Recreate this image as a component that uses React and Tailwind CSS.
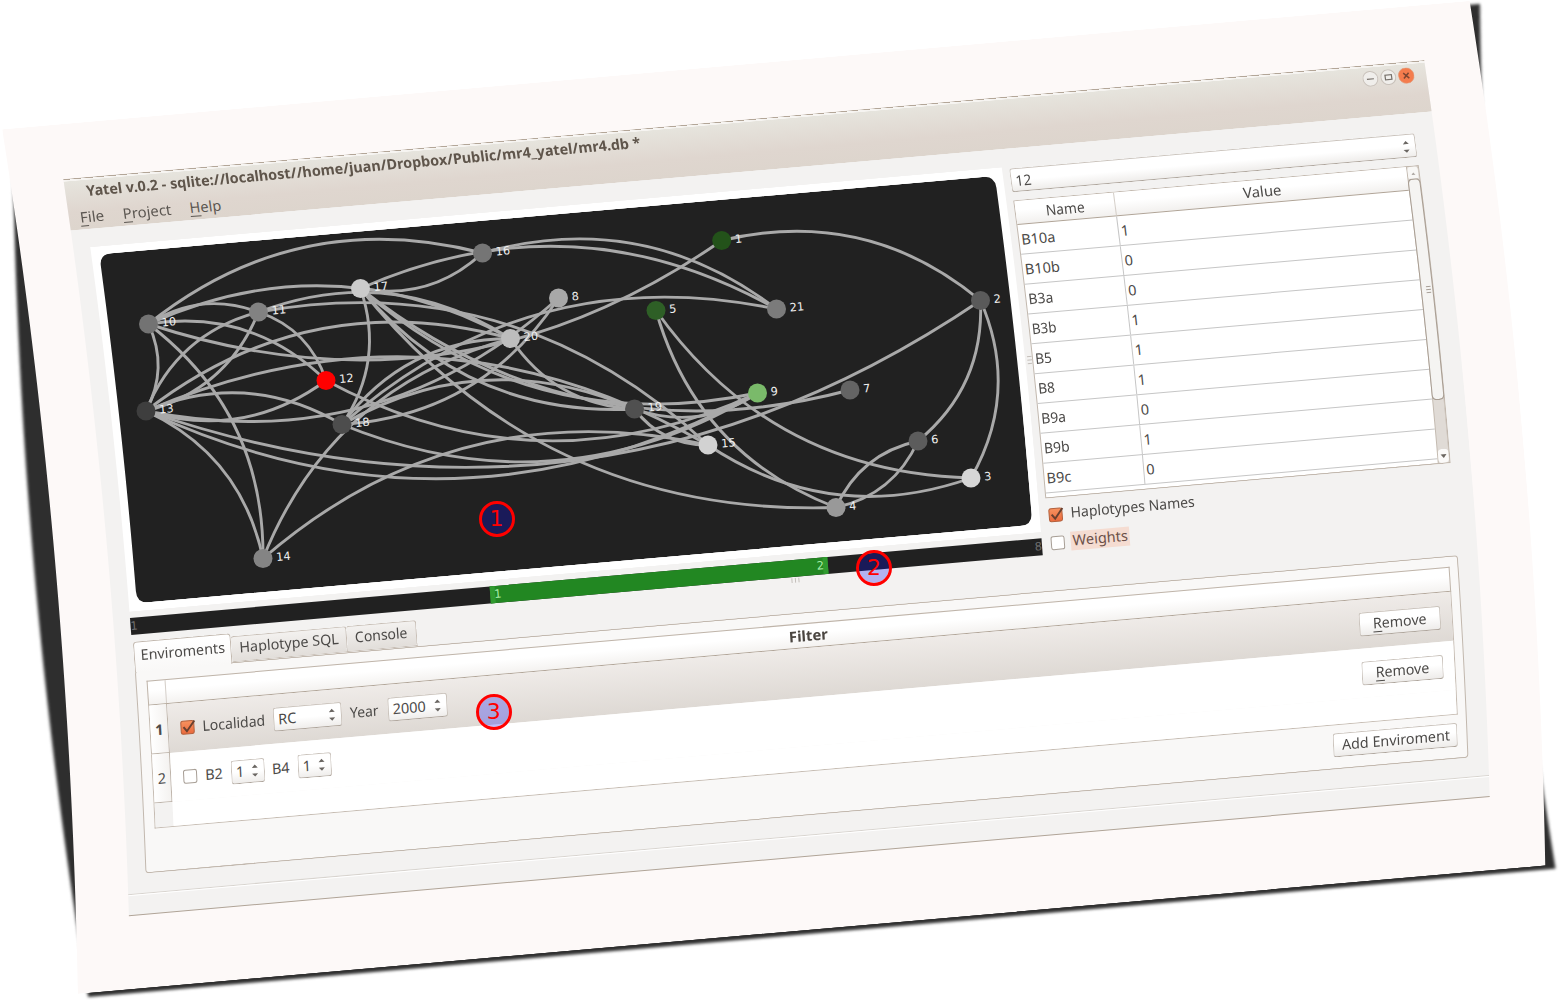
import { useLayoutEffect, useRef, useState } from "react";

const SHEET_H = 868;
const WINDOW_TOP = 55;

// The sheet bows sideways along a parabola, widest at half its height.
const bow = (q) => (60 * q * (SHEET_H - q)) / (SHEET_H * SHEET_H);
const slope = (q) => (60 / SHEET_H) * (1 - (2 * q) / SHEET_H);

function slabPath(w, h, q0, r, factor, pad) {
  const X = (x, y) => (x + pad + factor * bow(q0 + y)).toFixed(2);
  const pts = [];
  const n = Math.max(2, Math.ceil((h - 2 * r) / 20));
  let d = `M${X(r, 0)},0 L${X(w - r, 0)},0 Q${X(w, 0)},0 ${X(w, r)},${r} `;
  for (let i = 1; i <= n; i++) {
    const y = r + ((h - 2 * r) * i) / n;
    pts.push(y);
    d += `L${X(w, y)},${y.toFixed(2)} `;
  }
  d += `Q${X(w, h)},${h} ${X(w - r, h)},${h} L${X(r, h)},${h} Q${X(0, h)},${h} ${X(0, h - r)},${h - r} `;
  for (let i = pts.length - 2; i >= 0; i--) {
    d += `L${X(0, pts[i])},${pts[i].toFixed(2)} `;
  }
  d += `L${X(0, r)},${r} Q${X(0, 0)},0 ${X(r, 0)},0 Z`;
  return `path("${d}")`;
}

// Curved backdrop that fills its relative parent.
function Slab({ w, h, q, r = 0, factor = 1, className }) {
  return (
    <div
      className={`absolute top-0 -left-10 -right-10 h-full ${className}`}
      style={{ clipPath: slabPath(w, h, q, r, factor, 40) }}
    />
  );
}

// Content row that follows the sheet's curve at height v of the window.
function Bent({ v, className = "", children }) {
  const q = v + WINDOW_TOP;
  return (
    <div
      className={className}
      style={{ transform: `translateX(${bow(q)}px) skewX(${Math.atan(slope(q))}rad)` }}
    >
      {children}
    </div>
  );
}

// Text condensed or stretched to a set width.
function Fit({ w, className = "", children }) {
  const ref = useRef(null);
  const [s, setS] = useState(1);
  useLayoutEffect(() => {
    setS(w / ref.current.offsetWidth);
  }, [w]);
  return (
    <span className={`inline-block shrink-0 whitespace-nowrap ${className}`} style={{ width: w }}>
      <span ref={ref} className="inline-block origin-left" style={{ transform: `scaleX(${s})` }}>
        {children}
      </span>
    </span>
  );
}

const Key = ({ children }) => (
  <span className="underline decoration-1 underline-offset-[3px]">{children}</span>
);

const Arrows = () => (
  <svg width="8" height="14" viewBox="0 0 8 14" className="mt-[1px] shrink-0">
    <path d="M1 4.2 L4 1 L7 4.2Z M1 9.8 L4 13 L7 9.8Z" fill="#6a6662" />
  </svg>
);

function Field({ children, className = "" }) {
  return (
    <div
      className={`flex h-6 shrink-0 items-center justify-between rounded-[3px] border border-[#cbc4bd] border-b-[#aea59c] bg-gradient-to-b from-white from-50% to-[#efedeb] pr-[5px] pl-[4px] ${className}`}
    >
      {children}
      <Arrows />
    </div>
  );
}

function Button({ children, className = "" }) {
  return (
    <div
      className={`flex h-6 items-center justify-center rounded-[3px] border border-[#cbc4bd] border-b-[#aea59c] bg-gradient-to-b from-white from-40% to-[#eeecea] pb-[1px] ${className}`}
    >
      {children}
    </div>
  );
}

function Check({ on }) {
  return (
    <svg width="16" height="16" viewBox="0 0 16 16" className="shrink-0 overflow-visible">
      <defs>
        <linearGradient id="orange" x1="0" y1="0" x2="0" y2="1">
          <stop offset="0" stopColor="#f7925f" />
          <stop offset="1" stopColor="#ea6a3d" />
        </linearGradient>
      </defs>
      <rect
        x="1.5"
        y="1.5"
        width="13"
        height="13"
        rx="2"
        fill={on ? "url(#orange)" : "#fff"}
        stroke={on ? "#b3603c" : "#a79e95"}
        strokeWidth="1"
      />
      {on && <path d="M4 7.5 L7.2 11.8 L15.2 1.8" fill="none" stroke="#69402f" strokeWidth="2" />}
    </svg>
  );
}

const NODES = {
  1: [721.7, 240.5, "#23521a"],
  2: [980.5, 300.5, "#5a5a5a"],
  3: [971, 478, "#d6d6d6"],
  4: [836, 507.5, "#999999"],
  5: [656, 310.5, "#2e5f26"],
  6: [918, 441, "#5c5c5c"],
  7: [850, 390, "#646464"],
  8: [558.5, 298, "#a8a8a8"],
  9: [757.5, 393, "#7aba6a"],
  10: [148.5, 324, "#737373"],
  11: [258.5, 312, "#828282"],
  12: [326, 380.5, "#ff0000"],
  13: [146, 411, "#3e3e3e"],
  14: [263, 558.5, "#848484"],
  15: [708, 445, "#d2d2d2"],
  16: [482.5, 253, "#757575"],
  17: [360.5, 288.5, "#cbcbcb"],
  18: [342, 424.5, "#4d4d4d"],
  19: [634.5, 409, "#505050"],
  20: [510.5, 338.5, "#bdbdbd"],
  21: [776.5, 309, "#7b7b7b"],
};

// Every link bulges to the left of its own direction.
const LINKS = [
  [1, 2], [1, 10], [2, 6], [2, 3], [2, 13], [9, 13], [3, 5], [4, 5], [3, 15],
  [4, 6], [6, 4], [4, 17], [7, 17], [9, 17], [19, 17], [10, 13], [18, 21], [8, 18],
  [8, 13], [12, 13], [13, 18], [11, 13], [13, 11], [13, 20], [13, 15], [11, 15],
  [19, 20], [10, 20], [10, 16], [10, 11], [10, 12], [10, 14], [11, 20], [16, 21],
  [17, 21], [16, 17], [17, 18], [11, 12], [9, 12], [9, 18], [13, 14], [14, 20],
  [14, 15], [18, 20], [18, 19], [9, 19], [15, 19],
];

function linkPath([a, b]) {
  const [x1, y1] = NODES[a];
  const [x2, y2] = NODES[b];
  const k = 0.25;
  const cx = (x1 + x2) / 2 + (y2 - y1) * k;
  const cy = (y1 + y2) / 2 - (x2 - x1) * k;
  return `M${x1},${y1} Q${cx},${cy} ${x2},${y2}`;
}

function Graph() {
  return (
    <svg className="absolute top-0 left-0 overflow-visible" width="915" height="366">
      <g transform="translate(-70 -125) rotate(5) translate(-2.2 -129.2)">
        {LINKS.map((l, i) => (
          <path key={i} d={linkPath(l)} fill="none" stroke="#a9a9a9" strokeWidth="2.9" />
        ))}
        {Object.entries(NODES).map(([id, [x, y, c]]) => (
          <g key={id}>
            <circle cx={x} cy={y} r="9.5" fill={c} />
            <text
              transform={`translate(${x + 13.5} ${y + 2.5}) rotate(-5)`}
              fontFamily="'DejaVu Sans', sans-serif"
              fontSize="11.3"
              fill="#f0f0f0"
            >
              {id}
            </text>
          </g>
        ))}
      </g>
    </svg>
  );
}

function TitleBar() {
  return (
    <div className="relative h-[52px] shrink-0">
      <Slab w={1366} h={52} q={WINDOW_TOP} className="bg-[linear-gradient(#b3a698_0px,#b3a698_1px,#f6f4f1_1px,#f6f4f1_2.5px,#e6e4dd_3px,#dfd6cf_34px,#ddd5cd_52px)]" />
      <div className="relative">
        <Bent v={14} className="flex h-7 items-center justify-between pr-3 pl-[21px]">
          <Fit w={556} className="-mt-[2px] font-bold text-[#5f554b]">
            Yatel v.0.2 - sqlite://localhost//home/juan/Dropbox/Public/mr4_yatel/mr4.db *
          </Fit>
          <div className="flex gap-[2px]">
            <svg width="16" height="16" viewBox="0 0 16 16">
              <circle cx="8" cy="8" r="7.4" fill="#f0eeeb" stroke="#c9c2bb" />
              <path d="M4.5 8.3H11.5" stroke="#77716b" strokeWidth="1.1" />
            </svg>
            <svg width="16" height="16" viewBox="0 0 16 16">
              <circle cx="8" cy="8" r="7.4" fill="#f0eeeb" stroke="#c9c2bb" />
              <rect x="4.9" y="5.8" width="6.4" height="4.6" fill="none" stroke="#77716b" strokeWidth="1.2" />
            </svg>
            <svg width="16" height="16" viewBox="0 0 16 16">
              <circle cx="8" cy="8" r="7.8" fill="#f47c4d" stroke="#e39a78" strokeWidth="0.8" />
              <path d="M5.3 5.3L10.7 10.7M10.7 5.3L5.3 10.7" stroke="#7d4632" strokeWidth="1.5" />
            </svg>
          </div>
        </Bent>
        <Bent v={39} className="flex h-[22px] items-center pl-[11px] text-[#5b5651]">
          <Fit w={24} className="mr-[19px]"><Key>F</Key>ile</Fit>
          <Fit w={48} className="mr-[19px]"><Key>P</Key>roject</Fit>
          <Fit w={32}><Key>H</Key>elp</Fit>
        </Bent>
      </div>
    </div>
  );
}

function GraphColumn() {
  return (
    <div className="w-[915px] shrink-0">
      <div className="relative h-[367px] p-2">
        <Slab w={915} h={367} q={WINDOW_TOP + 70} className="bg-white" />
        <div className="relative h-[351px]">
          <Slab w={899} h={351} q={WINDOW_TOP + 78} r={12} className="bg-[#212121]" />
        </div>
        <Graph />
      </div>
      <Bent v={451} className="mt-[6px] flex h-[17px] items-center bg-[#212121] font-['DejaVu_Sans',sans-serif] text-[11.5px] leading-none">
        <div className="w-[361px] text-[#6e6e6e]">1</div>
        <div className="flex h-full w-[339px] items-center justify-between border-x-[5px] border-[#2f9a2f] bg-[#228722] text-[#a5eba5]">
          <span className="-ml-[1px]">1</span>
          <span className="-mr-[1px]">2</span>
        </div>
        <div className="flex-1 text-right text-[#6e6e6e]">8</div>
      </Bent>
    </div>
  );
}

const GENES = [
  ["B10a", 1, 34], ["B10b", 0, 35], ["B3a", 0, 25], ["B3b", 1, 25], ["B5", 1, 17],
  ["B8", 1, 17], ["B9a", 0, 25], ["B9b", 1, 26], ["B9c", 0, 25],
];

function GeneTable() {
  return (
    <div className="relative mt-2 h-[300px]">
      <Slab w={407} h={300} q={WINDOW_TOP + 104} className="bg-[#c2b8ae]" />
      <div className="relative mx-px py-px">
        <div className="relative">
          <Slab w={405} h={298} q={WINDOW_TOP + 105} className="bg-white" />
          <div className="relative flex h-[298px]">
            <div className="w-[394px]">
              <Bent v={116.5} className="flex h-[24px] items-center border-b border-[#b0a497] bg-gradient-to-b from-white from-40% to-[#f2f0ee] text-center">
                <div className="flex h-full w-[100px] items-center justify-center border-r border-[#d5cfc9]"><Fit w={39}>Name</Fit></div>
                <div className="flex-1"><Fit w={38}>Value</Fit></div>
              </Bent>
              {GENES.map(([name, value, w], i) => (
                <Bent key={name} v={144 + i * 30} className="flex h-[30px] items-center border-b border-[#c6c6c6]">
                  <div className="flex h-full w-[100px] items-center border-r border-[#c6c6c6] pl-[2px]"><Fit w={w}>{name}</Fit></div>
                  <div className="pl-[2px]"><Fit w={8}>{value}</Fit></div>
                </Bent>
              ))}
            </div>
            <div className="relative w-[12px]">
              <Slab w={12} h={298} q={WINDOW_TOP + 105} className="bg-[#c4bbb1]" />
              <div className="relative ml-px h-[298px]">
                <Slab w={10.5} h={298} q={WINDOW_TOP + 105} className="bg-[#e0dbd6]" />
                <div className="relative h-[12px]">
                  <Slab w={10.5} h={14} q={WINDOW_TOP + 105} r={4} className="bg-[#f8f7f5]" />
                  <Bent v={111} className="pt-[5px] pl-[3px]">
                    <svg width="5" height="4" viewBox="0 0 5 4" className="block"><path d="M0.5 3.5L2.5 1L4.5 3.5Z" fill="#aaa49e" /></svg>
                  </Bent>
                </div>
                <div className="relative -ml-px h-[223px]">
                  <Slab w={12.5} h={223} q={WINDOW_TOP + 117} r={5} className="bg-[#a99e93]" />
                  <div className="relative mx-px h-[223px] py-px">
                    <div className="relative h-[221px]">
                      <Slab w={10.5} h={221} q={WINDOW_TOP + 118} r={4.5} className="bg-[#f5f4f2]" />
                      <Bent v={228} className="pt-[107px] pl-[3px]">
                        <svg width="5" height="8" viewBox="0 0 5 8"><path d="M0 1H5M0 4H5M0 7H5" stroke="#a79f97" /></svg>
                      </Bent>
                    </div>
                  </div>
                </div>
                <div className="h-[49px]" />
                <div className="relative h-[14px]">
                  <Slab w={10.5} h={14} q={WINDOW_TOP + 389} r={4} className="bg-[#fbfaf9]" />
                  <Bent v={396} className="pt-[5px] pl-[2px]">
                    <svg width="7" height="5" viewBox="0 0 7 5" className="block"><path d="M0.5 0.5H6.5L3.5 4.2Z" fill="#6b6660" /></svg>
                  </Bent>
                </div>
              </div>
            </div>
          </div>
        </div>
      </div>
    </div>
  );
}

function InspectorColumn() {
  return (
    <div className="w-[407px] shrink-0 pt-[2px]">
      <Bent v={84}>
        <Field><Fit w={16}>12</Fit></Field>
      </Bent>
      <GeneTable />
      <Bent v={422} className="mt-[5px] flex h-6 items-center gap-[7px] pl-[1px]">
        <Check on />
        <Fit w={125} className="-mt-[3px]">Haplotypes Names</Fit>
      </Bent>
      <Bent v={449.5} className="mt-[4px] flex h-6 items-center gap-[5px] pl-[1px]">
        <Check />
        <div className="-mt-[2px] flex h-[19px] items-center bg-[#f5dcd1] px-[2px] pb-[1px] text-[#6b5049]"><Fit w={55}>Weights</Fit></div>
      </Bent>
    </div>
  );
}

function FilterTable() {
  return (
    <div className="mx-[11px] h-[148px]">
      <Bent v={519} className="flex h-[25px] items-center border border-[#bfb4a9] border-b-[#b0a497] bg-gradient-to-b from-white from-40% to-[#f4f2f0]">
        <div className="h-full w-[18px] border-r border-[#d5cfc9]" />
        <div className="flex-1 text-center font-bold text-[#4a4540]"><Fit w={39}>Filter</Fit></div>
      </Bent>
      <Bent v={556.5} className="flex h-[49px] border-x border-[#c5bbb1]">
        <div className="flex w-[18px] items-center justify-center border-r border-b border-[#bdb3a9] bg-gradient-to-r from-white to-[#f4f2f0] font-bold"><Fit w={8}>1</Fit></div>
        <div className="flex flex-1 items-center bg-gradient-to-b from-[#efebe8] to-[#ded9d4] pr-[11px] pl-[11px]">
          <Check on />
          <Fit w={63} className="ml-[7px]">Localidad</Fit>
          <Field className="ml-[8px] w-[69px]"><Fit w={18}>RC</Fit></Field>
          <Fit w={29} className="ml-[8px]">Year</Fit>
          <Field className="ml-[9px] w-[60px]"><Fit w={33}>2000</Fit></Field>
          <Button className="ml-auto w-[82px]"><Fit w={54}><Key>R</Key>emove</Fit></Button>
        </div>
      </Bent>
      <Bent v={605.5} className="flex h-[49px] border-x border-[#c5bbb1]">
        <div className="flex w-[18px] items-center justify-center border-r border-b border-[#bdb3a9] bg-gradient-to-r from-white to-[#f4f2f0]"><Fit w={8}>2</Fit></div>
        <div className="flex flex-1 items-center bg-white pr-[11px] pl-[11px]">
          <Check />
          <Fit w={18} className="ml-[7px]">B2</Fit>
          <Field className="ml-[8px] w-[34px]"><Fit w={8}>1</Fit></Field>
          <Fit w={18} className="ml-[7px]">B4</Fit>
          <Field className="ml-[8px] w-[34px]"><Fit w={8}>1</Fit></Field>
          <Button className="ml-auto w-[82px]"><Fit w={54}><Key>R</Key>emove</Fit></Button>
        </div>
      </Bent>
      <Bent v={642.5} className="flex h-[25px] border-x border-b border-[#c5bbb1]">
        <div className="w-[18px] bg-[#f3f2f1]" />
        <div className="flex-1 bg-white" />
      </Bent>
    </div>
  );
}

function Tabs() {
  return (
    <div className="relative mx-[18px] mt-[7px]">
      <Bent v={482} className="relative z-10 flex h-[29px] items-end">
        <div className="-mb-[2px] flex h-[31px] w-[98px] items-center justify-center rounded-t-[4px] border border-b-0 border-[#c2b8ae] bg-gradient-to-b from-white to-[#f9f8f7] pb-[5px]"><Fit w={84}>Enviroments</Fit></div>
        <div className="flex h-[26px] w-[116px] items-center justify-center rounded-t-[3px] border border-l-0 border-[#c8bfb6] bg-gradient-to-b from-[#f3f1ef] to-[#e2deda] pb-[3px]"><Fit w={100}>Haplotype SQL</Fit></div>
        <div className="flex h-[26px] w-[70px] items-center justify-center rounded-t-[3px] border border-l-0 border-[#c8bfb6] bg-gradient-to-b from-[#f3f1ef] to-[#e2deda] pb-[3px]"><Fit w={53}>Console</Fit></div>
      </Bent>
      <div className="relative h-[203px]">
        <Slab w={1328} h={203} q={WINDOW_TOP + 496} r={4} className="bg-[#c2b8ae]" />
        <div className="relative mx-px h-full py-px">
          <div className="relative h-[201px]">
            <Slab w={1326} h={201} q={WINDOW_TOP + 497} r={3} className="bg-[#f9f8f7]" />
            <div className="relative -mx-px pt-[10px]">
              <FilterTable />
              <Bent v={675} className="mt-[8px] flex justify-end pr-[12px]">
                <Button className="w-[125px]"><Fit w={108}>Add Enviroment</Fit></Button>
              </Bent>
            </div>
          </div>
        </div>
      </div>
    </div>
  );
}

function Badge({ n, className }) {
  return (
    <div
      className={`absolute flex h-9 w-9 items-center justify-center rounded-full border-[3px] border-[#ff0000] bg-[rgba(8,8,240,0.27)] bg-clip-padding font-['DejaVu_Sans',sans-serif] text-[22px] leading-none text-[#ff0000] ${className}`}
    >
      {n}
    </div>
  );
}

export default function App() {
  return (
    <main className="relative h-[1003px] w-[1564px] overflow-hidden bg-white pt-[129px] pl-[2px] font-['Noto_Sans',sans-serif] text-[14.5px] leading-none text-[#4c4a48]">
      <div className="relative h-[868px] w-[1473px] origin-top-left translate-x-[0.2px] translate-y-[0.2px] -rotate-5">
        <div className="absolute top-[4px] left-[10px] h-[868px] w-[1473px] blur-[1.5px]">
          <Slab w={1473} h={868} q={0} factor={-1.1} className="bg-[#2e2e2e]" />
        </div>
        <Slab w={1473} h={868} q={0} className="bg-[#fdf9f8]" />
        <div className="relative pt-[55px] pl-[53px]">
          <div className="relative flex h-[740px] w-[1366px] flex-col">
            <Slab w={1366} h={740} q={WINDOW_TOP} className="bg-[#f3f2f1]" />
            <TitleBar />
            <div className="relative flex h-[408px] shrink-0 gap-[7px] pt-[18px] pl-[17px]">
              <GraphColumn />
              <InspectorColumn />
              <Bent v={265} className="absolute top-[208px] left-[934px]">
                <svg width="5" height="10" viewBox="0 0 5 10"><path d="M0 1H5M0 4.5H5M0 8H5" stroke="#c4bfba" /></svg>
              </Bent>
              <Bent v={464} className="absolute top-[409px] left-[679px]">
                <svg width="9" height="5" viewBox="0 0 9 5"><path d="M1 0V5M4.5 0V5M8 0V5" stroke="#c4bfba" /></svg>
              </Bent>
            </div>
            <Tabs />
            <Bent v={719} className="mt-[19px] h-[2px] border-t border-b border-t-[#d8d4cf] border-b-white" />
            <Bent v={739.5} className="mt-auto h-px bg-[#b0a497]" />
          </div>
        </div>
      </div>
      <Badge n={1} className="top-[501px] left-[478.5px]" />
      <Badge n={2} className="top-[549.5px] left-[856px]" />
      <Badge n={3} className="top-[694px] left-[475.7px]" />
    </main>
  );
}
